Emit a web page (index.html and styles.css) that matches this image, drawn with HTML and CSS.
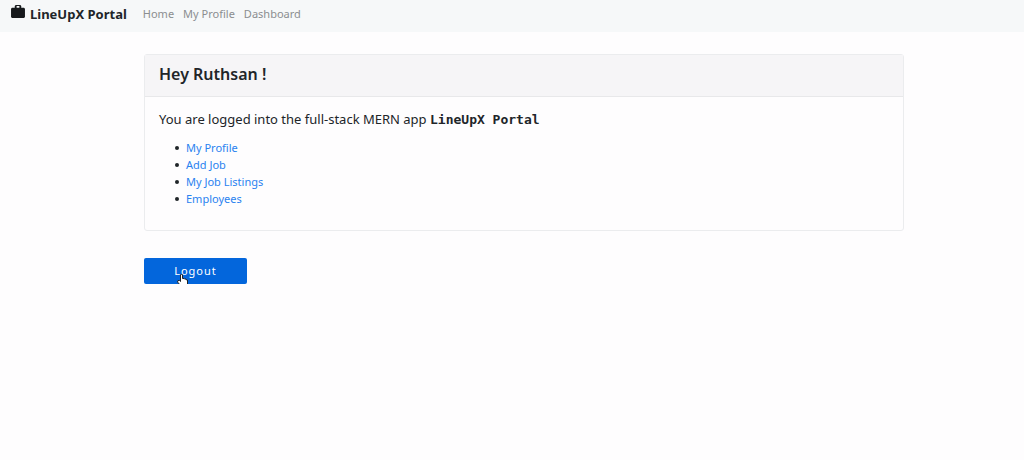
FILE: index.html
```html
<!DOCTYPE html>
<html lang="en">
<head>
<meta charset="utf-8">
<title>LineUpX Portal</title>
<link rel="stylesheet" href="styles.css">
</head>
<body>
<nav class="navbar">
  <a class="brand" href="#">
    <svg class="brand-icon" viewBox="0 0 15 14" aria-hidden="true"><path d="M4 3V1l1-1h5l1 1v2h3l1 1v9l-1 1H1l-1-1V4l1-1zm2 0h3V1H6z"/></svg>
    <span>LineUpX Portal</span>
  </a>
  <a class="nav-link" href="#">Home</a>
  <a class="nav-link" href="#">My Profile</a>
  <a class="nav-link" href="#">Dashboard</a>
</nav>
<main class="container">
  <section class="card">
    <h1 class="card-header">Hey Ruthsan !</h1>
    <div class="card-body">
      <p class="lead">You are logged into the full-stack MERN app <span class="app-name">LineUpX Portal</span></p>
      <ul class="links">
        <li><a href="#">My Profile</a></li>
        <li><a href="#">Add Job</a></li>
        <li><a href="#">My Job Listings</a></li>
        <li><a href="#">Employees</a></li>
      </ul>
    </div>
  </section>
  <div class="actions">
    <button class="logout" type="button">Logout</button>
    <svg class="pointer" viewBox="0 0 11 15" aria-hidden="true"><path d="M3.500 8.500V2L4.500 1L5.500 2V5.500L7 5.500L7.500 6L9 6L9.500 7H10.500V11L9.500 12.500V14.500H4V13L.5 9L1 7.500H2.500Z"/></svg>
  </div>
</main>
</body>
</html>
```
FILE: styles.css
```css
* { box-sizing: border-box; }
body {
  margin: 0;
  background: #fefdfe;
  color: #212529;
  font: 11px/16px "Noto Sans", "Open Sans", sans-serif;
}
a { color: #2a82f0; text-decoration: none; }
.navbar {
  display: flex;
  align-items: center;
  gap: 9px;
  height: 32px;
  padding: 0 11px 4px;
  background: #f6f8f9;
}
.brand {
  display: flex;
  align-items: center;
  gap: 5px;
  margin-right: 7px;
  color: #212529;
  font-size: 13px;
  font-weight: 700;
}
.brand-icon { width: 14px; height: 13px; margin-bottom: 6px; fill: #16191c; }
.nav-link { color: #8b8e90; }
.container { width: 100%; max-width: 784px; margin: 22px auto 0; padding-left: 24px; }
.card { border: 1px solid #ebecee; border-radius: 3px; }
.card-header {
  margin: 0;
  padding: 7px 14px 10px;
  border-bottom: 1px solid #e8e8ea;
  background: #f6f5f7;
  font-size: 16px;
  line-height: 24px;
  font-weight: 600;
}
.card-body { padding: 13px 14px 23px; }
.lead { margin: 0 0 11px; font-size: 13px; line-height: 18px; }
.app-name { font-family: "DejaVu Sans Mono", monospace; font-weight: 700; }
.links { display: grid; gap: 1px; margin: 0; padding-left: 16px; list-style: none; }
.links li { display: flex; align-items: center; gap: 7px; }
.links li::before { content: ""; width: 4px; height: 4px; border-radius: 50%; background: #212529; }
.actions { position: relative; margin-top: 27px; }
.logout {
  display: block;
  width: 103px;
  height: 26px;
  border: 0;
  border-radius: 2px;
  background: #0366dc;
  color: #fff;
  font: inherit;
  letter-spacing: 1px;
}
.pointer { position: absolute; left: 33px; top: 15px; width: 11px; height: 15px; fill: #fff; stroke: #222; stroke-width: 1; }
```
